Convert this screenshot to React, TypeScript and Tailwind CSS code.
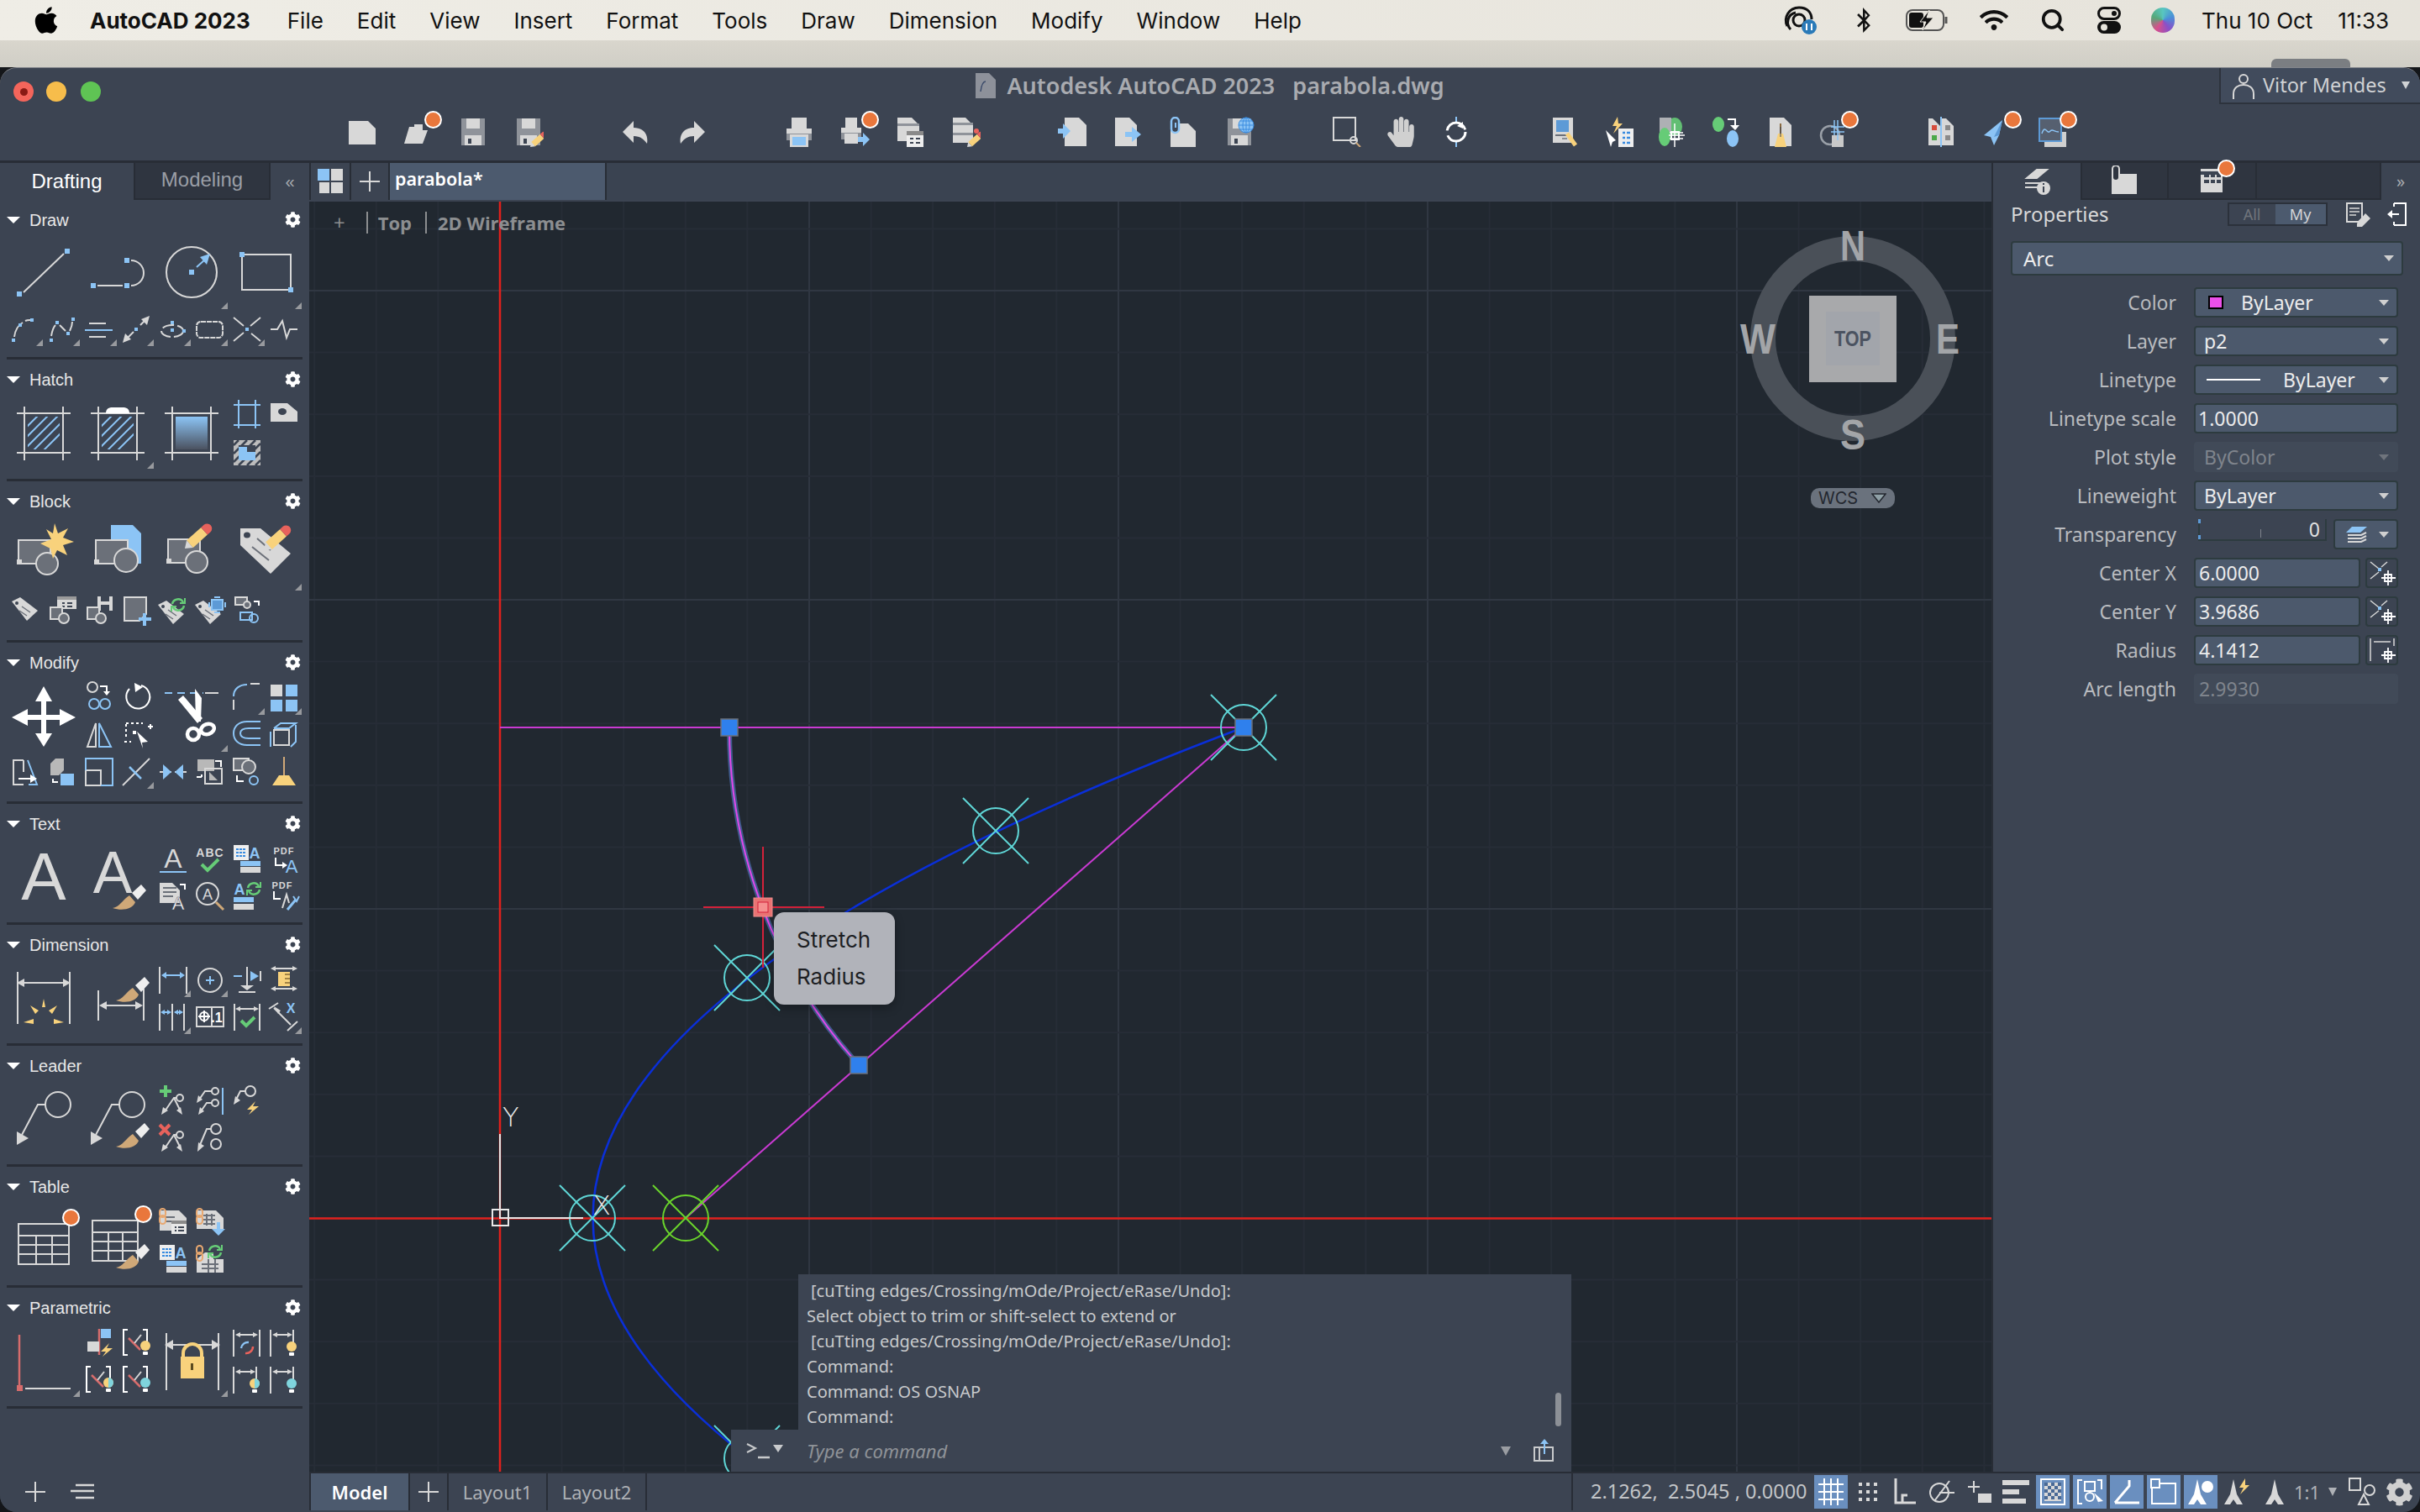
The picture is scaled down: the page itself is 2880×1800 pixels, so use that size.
import { FaApple, FaBluetoothB, FaCog, FaHandPaper, FaWifi } from "react-icons/fa";
import { Search } from "lucide-react";
import type { ReactNode } from "react";

const W = "#d8d8d8";
const B = "#8cc4f5";
const Y = "#f8d27c";
const RD = "#e8625c";
const GR = "#66cc77";
const TN = "#cfa878";
const DK = "#6b7079";
const BG = "#3c4452";

type PathProps = { d: string; c?: string; w?: number };
const P = ({ d, c = W, w = 2 }: PathProps) => <path d={d} fill="none" stroke={c} strokeWidth={w} />;
const F = ({ d, c = W }: PathProps) => <path d={d} fill={c} />;
const R = ({ x, y, w, h, c = W }: { x: number; y: number; w: number; h: number; c?: string }) => (
  <rect x={x} y={y} width={w} height={h} fill={c} />
);
const O = ({ x, y, w, h, c = W, f = "none", s = 2 }: { x: number; y: number; w: number; h: number; c?: string; f?: string; s?: number }) => (
  <rect x={x} y={y} width={w} height={h} fill={f} stroke={c} strokeWidth={s} />
);
const C = ({ x, y, r, c = W, f = "none", s = 2 }: { x: number; y: number; r: number; c?: string; f?: string; s?: number }) => (
  <circle cx={x} cy={y} r={r} fill={f} stroke={c} strokeWidth={s} />
);
const Q = ({ x, y, s = 5, c = B }: { x: number; y: number; s?: number; c?: string }) => <rect x={x} y={y} width={s} height={s} fill={c} />;
const Doc = ({ x, y, w, h, c = W }: { x: number; y: number; w: number; h: number; c?: string }) => (
  <path d={`M${x} ${y}H${x + w - 9}L${x + w} ${y + 9}V${y + h}H${x}Z`} fill={c} />
);
const Pencil = ({ x, y, k = 1 }: { x: number; y: number; k?: number }) => (
  <g transform={`translate(${x} ${y}) scale(${k}) rotate(-42)`}>
    <path d="M0 0L7 -5V5Z" fill={W} />
    <rect x={7} y={-5} width={20} height={10} fill={Y} />
    <path d="M27 -5H31A5 5 0 0 1 31 5H27Z" fill={RD} />
  </g>
);
const Brush = ({ x, y }: { x: number; y: number }) => (
  <g transform={`translate(${x} ${y})`}>
    <path d="M0 0C8 -1 12 -10 20 -15L27 -7C24 1 12 4 0 0Z" fill={TN} />
    <path d="M23 -18L34 -28L40 -21L30 -10Z" fill="#eeeeee" />
  </g>
);
const Bulb = ({ x, y, c = Y, c2 }: { x: number; y: number; c?: string; c2?: string }) => (
  <g>
    <circle cx={x} cy={y} r={6} fill={c} />
    {c2 && <path d={`M${x} ${y - 6}A6 6 0 0 1 ${x} ${y + 6}Z`} fill={c2} />}
    <rect x={x - 3} y={y + 7} width={6} height={4} rx={1} fill="#ffffff" />
  </g>
);
const Sync = ({ x, y }: { x: number; y: number }) => (
  <g transform={`translate(${x} ${y})`} fill="none" stroke={GR} strokeWidth={2.5}>
    <path d="M-7 -1A7 7 0 0 1 6 -3" />
    <path d="M7 1A7 7 0 0 1 -6 3" />
    <path d="M8 -8V-2H2" strokeWidth={2} />
    <path d="M-8 8V2H-2" strokeWidth={2} />
  </g>
);
const Bolt = ({ x, y, c = Y }: { x: number; y: number; c?: string }) => (
  <path transform={`translate(${x} ${y})`} d="M4 -8L-6 2H0L-4 8L8 -2H1Z" fill={c} />
);
const TagS = ({ x = 0, y = 0 }: { x?: number; y?: number }) => (
  <g transform={`translate(${x} ${y})`}>
    <path d="M6 11L16 6L37 22L24 34Z" fill={W} />
    <circle cx={12} cy={13} r={2} fill={BG} />
    <path d="M18 17L28 24M15 22L24 28" stroke={DK} strokeWidth={1.5} />
  </g>
);
const Chain = ({ x, y }: { x: number; y: number }) => (
  <g transform={`translate(${x} ${y})`} fill="none" stroke="#e8a870" strokeWidth={2}>
    <rect x={0} y={0} width={7} height={10} rx={3.5} />
    <rect x={0} y={8} width={7} height={10} rx={3.5} />
  </g>
);

const S = ({ children }: { children?: ReactNode }) => (
  <svg width={44} height={44} viewBox="0 0 44 44" fill="none">{children}</svg>
);
const G = ({ children }: { children?: ReactNode }) => (
  <svg className="overflow-visible" width={88} height={88} viewBox="0 0 88 88" fill="none">{children}</svg>
);
const T = ({ children }: { children?: ReactNode }) => (
  <svg width={36} height={36} viewBox="0 0 36 36" fill="none">{children}</svg>
);

function Cell({ lg, fly, children }: { lg?: boolean; fly?: boolean; children?: ReactNode }) {
  return (
    <div className={lg ? "relative col-span-2 row-span-2 flex items-center justify-center" : "relative flex items-center justify-center"}>
      {children}
      {fly && <span className="absolute right-[1px] bottom-[2px] h-[8px] w-[8px] bg-[#989a9e] [clip-path:polygon(100%_0,100%_100%,0_100%)]" />}
    </div>
  );
}

function Section({ name, h, children }: { name: string; h: string; children: ReactNode }) {
  return (
    <section className={`${h} mx-[8px] border-b-[3px] border-[#282d36]`}>
      <div className="flex h-[44px] items-center justify-between pt-[3px]">
        <div className="flex items-center">
          <span className="h-0 w-0 border-x-[8px] border-t-[8px] border-x-transparent border-t-white" />
          <span className="ml-[11px] font-['Liberation_Sans'] text-[20px] text-[#e8e8e8]">{name}</span>
        </div>
        <FaCog className="mr-[2px] text-[19px] text-white" />
      </div>
      <div className="grid grid-cols-[repeat(8,44px)] auto-rows-[44px]">{children}</div>
    </section>
  );
}

const Frame = () => (
  <P d="M12 20H76M12 67H76M21 12V76M67 12V76" />
);
const Hatches = ({ id }: { id: string }) => (
  <g>
    <clipPath id={id}><rect x={25} y={24} width={38} height={39} /></clipPath>
    <path clipPath={`url(#${id})`} d="M10 50L44 16M10 62L56 16M20 64L68 16M32 64L70 26M44 64L72 36" stroke={B} strokeWidth={2} />
  </g>
);

function LeftPanel() {
  return (
    <aside className="flex h-full w-[368px] shrink-0 flex-col bg-[#3c4452]">
      <div className="flex h-[44px] shrink-0 font-['Liberation_Sans'] text-[24px]">
        <div className="flex w-[159px] items-center justify-center text-white">Drafting</div>
        <div className="flex w-[163px] items-center justify-center border-x-2 border-b-2 border-[#282d36] bg-[#2f3540] pb-[2px] text-[#9a9ea6]">Modeling</div>
        <div className="flex flex-1 items-center justify-center text-[20px] text-[#a8abb0]">«</div>
      </div>

      <Section name="Draw" h="h-[190px]">
        <Cell lg><G><P d="M20 66L68 20" /><Q x={12} y={65} s={6} /><Q x={69} y={14} s={6} /></G></Cell>
        <Cell lg><G><P d="M20 58H50" /><P d="M60 28A15 15 0 0 1 60 58" /><Q x={12} y={55} s={6} /><Q x={52} y={55} s={6} /><Q x={52} y={25} s={6} /></G></Cell>
        <Cell lg fly><G><C x={44} y={42} r={30} /><Q x={41} y={39} s={6} /><P d="M50 36L60 27" c={B} /><F d="M66 20L62 33L54 24Z" c={B} /></G></Cell>
        <Cell lg fly><G><O x={16} y={21} w={58} h={42} /><Q x={13} y={18} s={6} /><Q x={71} y={60} s={6} /></G></Cell>
        <Cell fly><S><P d="M9 31C10 23 14 17 19 14M22 12C24 11 26 11 28 11" /><Q x={6} y={33} s={4} /><Q x={14} y={15} s={4} /><Q x={28} y={9} s={4} /></S></Cell>
        <Cell fly><S><P d="M9 30C10 24 11 20 14 17M19 17L26 24M31 24C33 20 34 16 34 13" /><Q x={7} y={33} s={4} /><Q x={14} y={12} s={4} /><Q x={27} y={25} s={4} /><Q x={33} y={8} s={4} /></S></Cell>
        <Cell fly><S><P d="M10 15H30M10 31H30" /><P d="M5 23H38" c={B} /></S></Cell>
        <Cell fly><S><P d="M11 33L19 25M27 17L35 9" /><F d="M6 38L9 27L16 34Z" /><F d="M38 6L35 17L28 10Z" /><Q x={20} y={20} s={4} /></S></Cell>
        <Cell fly><S><ellipse cx={21} cy={24} rx={13} ry={7} stroke={W} strokeWidth={2} strokeDasharray="14 4" /><Q x={19} y={21} s={4} /><Q x={19} y={12} s={4} /><Q x={33} y={22} s={4} /></S></Cell>
        <Cell fly><S><rect x={6} y={13} width={31} height={19} rx={5} stroke={W} strokeWidth={2} strokeDasharray="6 1" /></S></Cell>
        <Cell fly><S><P d="M6 8L18 18M38 8L26 18M6 36L18 26M38 36L27 27" w={1.8} /><Q x={20} y={20} s={4} /></S></Cell>
        <Cell><S><P d="M6 22H14L20 12L25 32L29 22H38" /></S></Cell>
      </Section>

      <Section name="Hatch" h="h-[145px]">
        <Cell lg><G><Frame /><Hatches id="h1" /></G></Cell>
        <Cell lg fly><G><Frame /><Hatches id="h2" /><F d="M30 20C30 14 34 13 38 13H50C54 13 58 14 58 20Z" c="#ffffff" /></G></Cell>
        <Cell lg>
          <G>
            <defs><linearGradient id="hg" x1="0" y1="0" x2="0" y2="1"><stop offset="0" stopColor={B} /><stop offset="1" stopColor="#4b5260" /></linearGradient></defs>
            <Frame /><rect x={25} y={24} width={38} height={39} fill="url(#hg)" />
          </G>
        </Cell>
        <Cell><S><P d="M6 10H38M6 34H38M12 4V38M32 4V38" c={B} /></S></Cell>
        <Cell><S><F d="M6 8H26L38 18V30H6Z" /><ellipse cx={20} cy={18} rx={5} ry={4} fill={BG} /></S></Cell>
        <Cell><S><R x={6} y={8} w={32} h={30} c="#bdbdbd" /><path d="M6 14L12 8M6 24L22 8M6 34L32 8M12 38L38 12M22 38L38 22M32 38L38 32" stroke={BG} strokeWidth={2.5} /><R x={12} y={14} w={20} h={18} c={BG} /><F d="M12 16H22V22H32V32H12Z" c={B} /></S></Cell>
      </Section>

      <Section name="Block" h="h-[192px]">
        <Cell lg><G><O x={14} y={26} w={38} h={28} f={DK} /><C x={48} y={54} r={13} f={DK} /><Q x={12} y={49} s={6} c={W} /><path d="M57 6L61 18L73 12L67 23L80 28L67 32L72 44L60 38L55 48L52 36L40 30L53 25L47 13L55 18Z" fill={Y} /></G></Cell>
        <Cell lg><G><F d="M36 8H62L72 18V54H56L36 34Z" c={B} /><O x={18} y={26} w={38} h={28} f={DK} /><C x={54} y={50} r={14} f={DK} /><Q x={16} y={49} s={6} c={W} /></G></Cell>
        <Cell lg><G><O x={16} y={25} w={38} h={28} f={DK} /><C x={50} y={52} r={13} f={DK} /><Q x={14} y={48} s={6} c={W} /><Pencil x={36} y={36} k={1.15} /></G></Cell>
        <Cell lg fly><G><path d="M14 12H38L74 42L50 66L14 32Z" fill={W} /><ellipse cx={22} cy={20} rx={4} ry={3.5} fill={BG} /><path d="M34 24L50 38M28 34L48 50" stroke={DK} strokeWidth={2} /><Pencil x={42} y={38} k={1.15} /></G></Cell>
        <Cell><S><TagS /></S></Cell>
        <Cell><S><R x={16} y={5} w={23} h={15} /><R x={16} y={5} w={23} h={4} c="#9a9a9a" /><P d="M22 13H25M28 13H34M22 17H25M28 17H34" c={BG} /><O x={8} y={18} w={14} h={14} f={DK} /><C x={24} y={31} r={6} f={DK} /></S></Cell>
        <Cell><S><R x={20} y={5} w={18} h={17} c={W} /><R x={24} y={5} w={10} h={6} c={BG} /><R x={24} y={15} w={10} h={7} c={BG} /><O x={8} y={18} w={14} h={14} f={DK} /><C x={24} y={31} r={6} f={DK} /></S></Cell>
        <Cell><S><path d="M8 6H34V26L26 34H8Z" fill={DK} stroke={W} strokeWidth={2} /><path d="M25 32H40M32 25V40" stroke={B} strokeWidth={4} /></S></Cell>
        <Cell><S><TagS x={-2} y={4} /><Sync x={28} y={15} /></S></Cell>
        <Cell><S><TagS x={-2} y={4} /><O x={24} y={9} w={13} h={12} c={B} f="#5d9ad6" /><P d="M21 12V18M40 12V18M27 6H34M27 24H34" c={B} /></S></Cell>
        <Cell><S><O x={8} y={6} w={14} h={9} f={DK} /><C x={22} y={15} r={4} f={DK} /><P d="M30 11H36V16" c="#ffffff" /><O x={14} y={24} w={14} h={9} c={B} /><C x={30} y={31} r={5} c={B} /></S></Cell>
      </Section>

      <Section name="Modify" h="h-[192px]">
        <Cell lg><G><F d="M44 8L54 26H47V42H63V35L82 45L63 55V48H47V64H54L44 80L34 64H41V48H25V55L6 45L25 35V42H41V26H34Z" c="#ffffff" /></G></Cell>
        <Cell><S><C x={14} y={9} r={6} /><P d="M23 8H31V15" c="#ffffff" /><F d="M27 14H35L31 19Z" c="#ffffff" /><C x={16} y={29} r={6} c={B} /><C x={29} y={29} r={6} c={B} /></S></Cell>
        <Cell><S><path d="M28 7A14 14 0 1 1 14 11" stroke="#ffffff" strokeWidth={2} fill="none" /><F d="M20 4L30 9L21 15Z" c="#ffffff" /></S></Cell>
        <Cell lg fly>
          <G>
            <path d="M12 16H58" stroke={B} strokeWidth={2} strokeDasharray="9 6" />
            <P d="M60 16H76" c={W} />
            <F d="M48 11L56 22L55 50H49Z" c="#ffffff" />
            <F d="M28 24L34 19L57 46L51 52Z" c="#ffffff" />
            <circle cx={46} cy={65} r={7} stroke="#ffffff" strokeWidth={4.5} />
            <ellipse cx={63} cy={59} rx={8} ry={6} stroke="#ffffff" strokeWidth={4.5} transform="rotate(-20 63 59)" />
          </G>
        </Cell>
        <Cell fly><S><path d="M6 20C6 11 13 6 22 6" stroke={B} strokeWidth={2} fill="none" /><P d="M26 5H37M6 24V36" /></S></Cell>
        <Cell fly><S><R x={6} y={6} w={14} h={14} /><R x={24} y={6} w={14} h={14} c={B} /><R x={6} y={24} w={14} h={14} c={B} /><R x={24} y={24} w={14} h={14} c={B} /></S></Cell>
        <Cell><S><P d="M18 8V36H8Z" /><path d="M22 8V36H36Z" stroke={B} strokeWidth={2} /></S></Cell>
        <Cell><S><path d="M10 8H30M10 24V8M8 30H16" stroke="#ffffff" strokeWidth={2} strokeDasharray="3 3" /><Q x={18} y={17} s={4} c="#ffffff" /><F d="M23 18L36 30L29 31L30 38Z" c="#ffffff" /><P d="M36 12H42M39 9V15" c="#ffffff" /></S></Cell>
        <Cell><S><path d="M38 6H22C12 6 6 12 6 20C6 28 12 34 22 34H38M38 14H24C18 14 14 16 14 20C14 24 18 26 24 26H38" stroke={B} strokeWidth={2} fill="none" /></S></Cell>
        <Cell><S><O x={10} y={16} w={18} h={18} /><path d="M10 14L18 8H36L28 14H10" stroke={B} strokeWidth={2} /><path d="M6 18V36M36 10V30L30 36" stroke={B} strokeWidth={2} /></S></Cell>
        <Cell><S><P d="M20 8H8V37H20M20 8V22" /><path d="M25 8L36 37H26" stroke={B} strokeWidth={2} /><P d="M14 30H28" c="#ffffff" /><F d="M28 25L36 30L28 35Z" c="#ffffff" /></S></Cell>
        <Cell><S><path d="M8 12L14 6H24V20L18 26H8Z" fill="#b8b8b8" /><P d="M11 30V34H17" c="#ffffff" /><R x={20} y={24} w={16} h={14} c={B} /></S></Cell>
        <Cell><S><O x={6} y={20} w={18} h={18} /><path d="M6 20V6H38V38H24" stroke={B} strokeWidth={2} /></S></Cell>
        <Cell fly><S><P d="M6 38L38 6" /><path d="M14 16L28 30" stroke={B} strokeWidth={2.5} /></S></Cell>
        <Cell><S><P d="M6 22H20M24 22H38" /><F d="M10 13L20 22L10 31Z" c={B} /><F d="M34 13L24 22L34 31Z" c={B} /></S></Cell>
        <Cell><S><R x={7} y={7} w={20} h={14} c="#b8b8b8" /><P d="M28 9H35V16" c="#ffffff" /><P d="M6 28H12M12 25V28" c="#ffffff" /><O x={16} y={18} w={20} h={18} /><F d="M21 22V32H31Z" c="#b8b8b8" /></S></Cell>
        <Cell><S><O x={6} y={6} w={18} h={14} f={DK} /><C x={24} y={16} r={8} f={DK} /><P d="M10 26V33H18" c="#ffffff" /><C x={30} y={32} r={5} c={B} /></S></Cell>
        <Cell><S><path d="M22 4V26" stroke={TN} strokeWidth={2} /><F d="M16 26H28L36 38H8Z" c={Y} /></S></Cell>
      </Section>

      <Section name="Text" h="h-[144px]">
        <Cell lg><G><text x={44} y={70} textAnchor="middle" fontFamily="Liberation Sans" fontSize={80} fill={W}>A</text></G></Cell>
        <Cell lg><G><text x={38} y={62} textAnchor="middle" fontFamily="Liberation Sans" fontSize={70} fill={W}>A</text><Brush x={38} y={80} /></G></Cell>
        <Cell><S><text x={22} y={32} textAnchor="middle" fontFamily="Liberation Sans" fontSize={32} fill={W}>A</text><P d="M6 37H38" c={B} /></S></Cell>
        <Cell><S><text x={22} y={19} textAnchor="middle" fontFamily="Liberation Sans" fontWeight="bold" fontSize={14} letterSpacing={1} fill={W}>ABC</text><path d="M12 28L19 35L32 22" stroke={GR} strokeWidth={4} /></S></Cell>
        <Cell><S><R x={6} y={5} w={18} h={18} c="#eeeeee" /><path d="M9 10H21M9 14H21M9 18H21" stroke="#3a8ce0" strokeWidth={2} strokeDasharray="3 1" /><text x={31} y={21} textAnchor="middle" fontFamily="Liberation Sans" fontWeight="bold" fontSize={18} fill={B}>A</text><R x={14} y={24} w={24} h={6} c={B} /><R x={14} y={31} w={24} h={7} /></S></Cell>
        <Cell><S><text x={22} y={16} textAnchor="middle" fontFamily="Liberation Sans" fontWeight="bold" fontSize={11} letterSpacing={1} fill={W}>PDF</text><P d="M12 20V29H21" c="#ffffff" /><F d="M20 25L26 29L20 33Z" c="#ffffff" /><text x={31} y={38} textAnchor="middle" fontFamily="Liberation Sans" fontSize={22} fill={B}>A</text></S></Cell>
        <Cell><S><Doc x={6} y={6} w={24} h={24} /><P d="M10 12H26M10 17H26M10 22H22" c={DK} /><P d="M30 8H36V14" c="#ffffff" /><text x={28} y={38} textAnchor="middle" fontFamily="Liberation Sans" fontSize={22} fill="#ffffff" stroke={BG} strokeWidth={0.5}>A</text></S></Cell>
        <Cell><S><C x={19} y={19} r={13} /><text x={19} y={26} textAnchor="middle" fontFamily="Liberation Sans" fontSize={18} fill={W}>A</text><path d="M29 29L38 38" stroke={TN} strokeWidth={3} /></S></Cell>
        <Cell><S><text x={13} y={20} textAnchor="middle" fontFamily="Liberation Sans" fontWeight="bold" fontSize={18} fill={B}>A</text><Sync x={30} y={13} /><R x={6} y={23} w={24} h={6} c={B} /><R x={6} y={31} w={24} h={7} /></S></Cell>
        <Cell><S><text x={20} y={13} textAnchor="middle" fontFamily="Liberation Sans" fontWeight="bold" fontSize={11} letterSpacing={1} fill={W}>PDF</text><P d="M10 16V25H18" c="#ffffff" /><P d="M20 36L25 20L28 30" /><path d="M26 38L36 26" stroke={B} strokeWidth={3} /><path d="M33 22L37 28L40 22" stroke={B} strokeWidth={2} /></S></Cell>
      </Section>

      <Section name="Dimension" h="h-[144px]">
        <Cell lg><G><P d="M13 12V74M75 12V74M20 25H68" /><F d="M12 25L21 20V30Z" /><F d="M76 25L67 20V30Z" /><path d="M44 44L46 54H42ZM28 52L38 58L34 62ZM60 52L50 58L54 62ZM20 72L32 68V74ZM68 72L56 68V74Z" fill={Y} /></G></Cell>
        <Cell lg><G><P d="M21 34V70M75 32V70M30 52H66" /><F d="M22 52L31 47V57Z" /><F d="M74 52L65 47V57Z" /><Brush x={42} y={46} /></G></Cell>
        <Cell fly><S><P d="M6 6V38M38 6V38" /><path d="M11 16H33" stroke={B} strokeWidth={2} /><F d="M8 16L14 12V20Z" c={B} /><F d="M36 16L30 12V20Z" c={B} /></S></Cell>
        <Cell fly><S><C x={22} y={22} r={14} /><path d="M17 22H27M22 17V27" stroke={B} strokeWidth={2} /></S></Cell>
        <Cell><S><P d="M22 6V32M12 36H32" /><F d="M14 28H30L22 34Z" /><path d="M6 17H16" stroke={B} strokeWidth={2} /><F d="M36 17L26 11V23Z" c={B} /><P d="M38 11V23" c={W} /></S></Cell>
        <Cell><S><P d="M8 8H36M8 32H36" /><F d="M6 8L12 5V11Z" /><F d="M38 8L32 5V11Z" /><F d="M6 32L12 29V35Z" /><F d="M38 32L32 29V35Z" /><R x={15} y={12} w={14} h={17} c={Y} /><P d="M23 15H29M23 20H29M23 25H29" c="#a28345" /></S></Cell>
        <Cell fly><S><P d="M6 6V38M21 6V38M35 6V38" /><path d="M9 16H18M24 16H33" stroke={B} strokeWidth={2} /><F d="M7 16L12 13V19Z" c={B} /><F d="M20 16L15 13V19Z" c={B} /><F d="M23 16L28 13V19Z" c={B} /><F d="M34 16L29 13V19Z" c={B} /></S></Cell>
        <Cell><S><O x={6} y={10} w={32} h={23} /><P d="M24 10V33" /><C x={15} y={21} r={5} c="#ffffff" /><P d="M15 14V28M8 21H22" c="#ffffff" /><text x={30} y={28} textAnchor="middle" fontFamily="Liberation Sans" fontWeight="bold" fontSize={16} fill="#ffffff">.1</text></S></Cell>
        <Cell><S><P d="M7 6V38M37 6V38M12 12H32" /><F d="M8 12L14 9V15Z" /><F d="M36 12L30 9V15Z" /><path d="M15 26L21 32L31 22" stroke={GR} strokeWidth={4} /></S></Cell>
        <Cell fly><S><P d="M4 12L15 5M10 11L30 31M26 38L38 27" /><F d="M10 9L15 18L18 14Z" /><text x={30} y={17} textAnchor="middle" fontFamily="Liberation Sans" fontWeight="bold" fontSize={16} fill={B}>X</text></S></Cell>
      </Section>

      <Section name="Leader" h="h-[144px]">
        <Cell lg><G><C x={61} y={26} r={15} /><P d="M46 26H37L18 62" /><F d="M12 74L12 58L26 66Z" /></G></Cell>
        <Cell lg><G><C x={61} y={26} r={15} /><P d="M46 26H37L18 62" /><F d="M12 74L12 58L26 66Z" /><Brush x={42} y={76} /></G></Cell>
        <Cell><S><path d="M6 10H20M13 3V17" stroke={GR} strokeWidth={4} /><C x={30} y={18} r={4} /><P d="M26 18H23L12 34M23 18L30 32" /><F d="M8 38L10 29L16 33Z" /><F d="M33 38L26 33L31 29Z" /></S></Cell>
        <Cell><S><C x={28} y={10} r={4} /><C x={28} y={24} r={4} /><P d="M24 10H16L9 20M24 24H18L11 34" /><F d="M6 24L8 15L13 20Z" /><F d="M8 38L10 29L15 34Z" /><path d="M37 6V38" stroke={B} strokeWidth={2} /></S></Cell>
        <Cell><S><C x={26} y={10} r={6} /><P d="M20 10H14L9 20" /><F d="M6 26L8 16L14 21Z" /><Bolt x={28} y={30} /></S></Cell>
        <Cell />
        <Cell><S><path d="M6 6L18 18M18 6L6 18" stroke={RD} strokeWidth={4} /><C x={30} y={18} r={4} /><P d="M26 18H23L12 34M23 18L30 32" /><F d="M8 38L10 29L16 33Z" /><F d="M33 38L26 33L31 29Z" /></S></Cell>
        <Cell><S><C x={29} y={11} r={6} /><C x={29} y={29} r={6} /><P d="M23 11H18L10 30" /><F d="M7 38L8 27L15 31Z" /></S></Cell>
      </Section>

      <Section name="Table" h="h-[144px]">
        <Cell lg><G><O x={14} y={24} w={60} h={48} /><P d="M14 38H74M14 49H74M14 60H74M35 38V72M54 38V72" /></G><span className="absolute left-[66px] top-[6px] h-[21px] w-[21px] rounded-full border-2 border-white bg-[#e9773c]" /></Cell>
        <Cell lg><G><O x={14} y={20} w={54} h={48} /><P d="M14 34H68M14 45H68M14 56H68M33 34V68M50 34V68" /><Brush x={42} y={76} /></G><span className="absolute left-[64px] top-[2px] h-[21px] w-[21px] rounded-full border-2 border-white bg-[#e9773c]" /></Cell>
        <Cell><S><Doc x={6} y={8} w={32} h={24} /><P d="M12 16H24M12 21H24" c={DK} /><Chain x={6} y={6} /><R x={20} y={20} w={18} h={16} c="#e8e8e8" /><R x={20} y={20} w={18} h={4} c="#8a8a8a" /><P d="M24 28H26M28 28H35M24 32H26M28 32H35" c={BG} /></S></Cell>
        <Cell><S><Doc x={6} y={8} w={32} h={22} /><P d="M14 14H28M14 19H28M14 24H28M18 12V26M24 12V26" c={DK} /><Chain x={6} y={6} /><path d="M32 22V30" stroke={B} strokeWidth={4} /><F d="M24 30H40L32 38Z" c={B} /></S></Cell>
        <Cell />
        <Cell />
        <Cell><S><R x={6} y={5} w={18} h={18} c="#eeeeee" /><path d="M9 10H21M9 14H21M9 18H21" stroke="#3a8ce0" strokeWidth={2} strokeDasharray="3 1" /><text x={31} y={21} textAnchor="middle" fontFamily="Liberation Sans" fontWeight="bold" fontSize={18} fill={B}>A</text><R x={14} y={24} w={24} h={6} c={B} /><R x={14} y={31} w={24} h={7} /></S></Cell>
        <Cell><S><path d="M6 22L16 14H26V22H38V38H6Z" fill={W} /><P d="M12 28H32M12 33H32M20 22V38M28 22V38" c={DK} /><Chain x={6} y={6} /><Sync x={28} y={13} /></S></Cell>
      </Section>

      <Section name="Parametric" h="h-[144px]">
        <Cell lg fly><G><path d="M15 12V72" stroke="#d66c6c" strokeWidth={2.5} /><R x={12} y={72} w={7} h={7} c="#d66c6c" /><P d="M22 76H76" /></G></Cell>
        <Cell><S><path d="M22 5V36" stroke="#d66c6c" strokeWidth={2.5} /><R x={24} y={5} w={12} h={11} c={B} /><R x={8} y={20} w={14} h={12} /><Bolt x={30} y={30} /></S></Cell>
        <Cell><S><P d="M12 6H7V36H12M30 6H35V20" c="#ffffff" /><path d="M13 16L27 30" stroke="#d66c6c" strokeWidth={2.5} /><P d="M20 22L28 12" /><Bulb x={33} y={25} /></S></Cell>
        <Cell lg fly><G><P d="M14 10V78M76 10V78M20 24H70" /><F d="M12 24L22 18V30Z" /><F d="M78 24L68 18V30Z" /><path d="M34 38V34A11 11 0 0 1 56 34V38" stroke={Y} strokeWidth={4} fill="none" /><R x={31} y={38} w={28} h={26} c={Y} /><R x={43} y={46} w={3} h={8} c="#5a4a20" /></G></Cell>
        <Cell><S><P d="M6 6V38M37 6V38M12 12H32" /><F d="M8 12L14 9V15Z" /><F d="M35 12L29 9V15Z" /><path d="M15 28A8 8 0 0 1 24 21" stroke={B} strokeWidth={2.5} fill="none" /><path d="M29 26A8 8 0 0 1 20 34" stroke={RD} strokeWidth={2.5} fill="none" /></S></Cell>
        <Cell><S><P d="M6 6V38M33 6V22M10 12H30" /><F d="M8 12L14 9V15Z" /><F d="M32 12L26 9V15Z" /><Bulb x={31} y={26} /></S></Cell>
        <Cell><S><P d="M12 6H7V36H12M30 6H35V20" c="#ffffff" /><path d="M13 16L27 30" stroke="#d66c6c" strokeWidth={2.5} /><P d="M20 22L28 12" /><Bulb x={33} y={25} c={Y} c2="#7fd4dd" /></S></Cell>
        <Cell><S><P d="M12 6H7V36H12M30 6H35V20" c="#ffffff" /><path d="M13 16L27 30" stroke="#d66c6c" strokeWidth={2.5} /><P d="M20 22L28 12" /><Bulb x={33} y={25} c="#7fd4dd" /></S></Cell>
        <Cell><S><P d="M6 6V38M33 6V22M10 12H30" /><F d="M8 12L14 9V15Z" /><F d="M32 12L26 9V15Z" /><Bulb x={31} y={26} c={Y} c2="#7fd4dd" /></S></Cell>
        <Cell><S><P d="M6 6V38M33 6V22M10 12H30" /><F d="M8 12L14 9V15Z" /><F d="M32 12L26 9V15Z" /><Bulb x={31} y={26} c="#7fd4dd" /></S></Cell>
      </Section>

      <div className="mt-auto flex h-[44px] items-center gap-[30px] pb-[4px] pl-[30px]">
        <svg width={24} height={24} viewBox="0 0 24 24"><path d="M0 12H24M12 0V24" stroke="#d8d8d8" strokeWidth={2} /></svg>
        <svg width={28} height={20} viewBox="0 0 28 20"><path d="M6 2H28M0 9H28M6 17H28" stroke="#d8d8d8" strokeWidth={2.5} /></svg>
      </div>
    </aside>
  );
}

function Badge() {
  return <span className="absolute left-[26px] top-[-7px] h-[21px] w-[21px] rounded-full border-2 border-white bg-[#e9773c]" />;
}

function Tool({ badge, children }: { badge?: boolean; children: ReactNode }) {
  return (
    <div className="relative h-[36px] w-[36px]">
      {children}
      {badge && <Badge />}
    </div>
  );
}

const Floppy = () => (
  <g>
    <R x={4} y={2} w={28} h={32} c="#8f939a" />
    <R x={10} y={2} w={16} h={12} />
    <R x={8} y={22} w={20} h={12} />
    <R x={12} y={26} w={4} h={6} c={BG} />
  </g>
);
const Printer = () => (
  <g>
    <R x={9} y={1} w={18} h={13} />
    <R x={3} y={14} w={30} h={6} />
    <R x={3} y={20} w={30} h={8} c="#8f939a" />
    <R x={7} y={21} w={22} h={15} />
    <R x={10} y={24} w={16} h={10} c={B} />
  </g>
);

function Toolbar() {
  return (
    <div className="flex h-[68px] items-center gap-[92px] pl-[413px]">
      <div className="flex gap-[30px]">
        <Tool><T><Doc x={2} y={5} w={32} h={28} /></T></Tool>
        <Tool badge><T><F d="M2 32L8 12H14V9H24V16H30L24 32Z" /></T></Tool>
        <Tool><T><Floppy /></T></Tool>
        <Tool><T><Floppy /><Pencil x={20} y={36} k={0.7} /></T></Tool>
      </div>
      <div className="flex gap-[30px]">
        <Tool><T><F d="M2 18L15 5V13C26 13 33 20 31 32C27 26 22 23 15 23V31Z" /></T></Tool>
        <Tool><T><F d="M34 18L21 5V13C10 13 3 20 5 32C9 26 14 23 21 23V31Z" /></T></Tool>
      </div>
      <div className="flex gap-[30px]">
        <Tool><T><Printer /></T></Tool>
        <Tool badge><T><R x={7} y={1} w={14} h={12} /><R x={2} y={13} w={24} h={6} /><R x={2} y={19} w={24} h={8} c="#8f939a" /><R x={6} y={20} w={16} h={12} /><path d="M22 24H28V19L36 27L28 35V30H22Z" fill={B} /></T></Tool>
        <Tool><T><Doc x={3} y={1} w={26} h={28} /><R x={3} y={8} w={26} h={3} c="#8f939a" /><R x={14} y={17} w={20} h={19} c="#eeeeee" /><R x={14} y={17} w={20} h={5} c="#8a8a8a" /><P d="M18 26H22M25 26H30M18 31H22M25 31H30" c={BG} /></T></Tool>
        <Tool><T><Doc x={3} y={1} w={24} h={30} /><R x={3} y={7} w={24} h={3} c="#8f939a" /><R x={3} y={19} w={24} h={3} c="#8f939a" /><Pencil x={20} y={36} k={0.7} /><circle cx={31} cy={17} r={3} fill={RD} /></T></Tool>
      </div>
      <div className="flex gap-[30px]">
        <Tool><T><Doc x={8} y={1} w={26} h={34} /><path d="M0 14H6V8L15 17L6 26V20H0Z" fill={B} /></T></Tool>
        <Tool><T><Doc x={2} y={1} w={26} h={34} /><path d="M14 18H22V12L33 21L22 30V24H14Z" fill={B} /></T></Tool>
        <Tool><T><Doc x={2} y={8} w={30} h={28} c={W} /><rect x={3} y={1} width={9} height={18} rx={4.5} stroke={B} strokeWidth={2.5} fill={BG} /><path d="M8 7V13" stroke={B} strokeWidth={2} /></T></Tool>
        <Tool><T><Floppy /><circle cx={26} cy={10} r={9} fill={B} stroke="#3a8ce0" /><path d="M17 10H35M26 1V19M19 5H33M19 15H33" stroke="#3a8ce0" strokeWidth={1} /><ellipse cx={26} cy={10} rx={4} ry={9} stroke="#3a8ce0" fill="none" /></T></Tool>
      </div>
      <div className="flex items-center">
        <Tool><T><O x={2} y={1} w={26} h={27} /><C x={26} y={28} r={4} c={W} /><path d="M29 31L34 36" stroke={TN} strokeWidth={2} /></T></Tool>
        <div className="ml-[28px]"><Tool><FaHandPaper className="h-[36px] w-[36px] text-[#d0d0d0]" /></Tool></div>
        <div className="ml-[30px] mr-[3px]"><Tool><T><path d="M18 0V7M18 29V36" stroke={B} strokeWidth={2} /><circle cx={18} cy={18} r={11} stroke="#ffffff" strokeWidth={3} strokeDasharray="30 6" /><path d="M19 11L26 6V14Z" fill="#ffffff" /></T></Tool></div>
      </div>
      <div className="flex gap-[28px] -ml-[1px]">
        <Tool><T><R x={3} y={1} w={24} h={30} /><R x={7} y={4} w={15} h={14} c="#5d9ad6" /><P d="M6 22H20" c={DK} /><path d="M20 20L30 34" stroke={Y} strokeWidth={5} /><path d="M14 26L20 26M28 22L34 30" stroke={BG} strokeWidth={1} /></T></Tool>
        <Tool><T><F d="M2 16L14 28L10 30L8 36Z" c="#ffffff" /><path d="M16 0L10 11H15L11 20L22 8H17Z" fill={Y} /><R x={17} y={14} w={18} h={22} c="#eeeeee" /><path d="M22 19H25M27 19H31M22 25H25M27 25H31M22 31H25M27 31H31" stroke="#3a8ce0" strokeWidth={2.5} /></T></Tool>
        <Tool><T><ellipse cx={20} cy={12} rx={9} ry={11} fill={GR} opacity={0.9} /><R x={2} y={1} w={14} h={18} c="#aeb0b4" /><ellipse cx={8} cy={24} rx={7} ry={11} fill={GR} /><path d="M20 8V36M13 22H32M14 19H30M14 26H30" stroke="#ffffff" strokeWidth={1.5} /><rect x={16} y={18} width={9} height={9} fill="none" stroke="#ffffff" strokeWidth={2} /></T></Tool>
        <Tool><T><ellipse cx={8} cy={9} rx={7} ry={9} fill={GR} /><path d="M19 3H28V12" stroke="#ffffff" strokeWidth={2} fill="none" /><path d="M22 10H33L28 16Z" fill="#ffffff" /><ellipse cx={25} cy={26} rx={7} ry={10} fill={B} /></T></Tool>
        <Tool><T><Doc x={5} y={1} w={26} h={34} /><path d="M18 8V20" stroke="#8a6a40" strokeWidth={2} /><path d="M15 20H21L25 36H11Z" fill={Y} /><path d="M18 12V24" stroke={BG} strokeWidth={1} /></T></Tool>
        <Tool badge><T><C x={13} y={22} r={11} c="#9aa0a8" s={2.5} /><R x={15} y={22} w={14} h={14} c="#c9c9c9" /><path d="M22 4V28M18 4V22M14 12H30M14 18H30" stroke={B} strokeWidth={1.5} /></T></Tool>
      </div>
      <div className="flex gap-[30px]">
        <Tool><T><Doc x={2} y={2} w={14} h={32} /><Doc x={18} y={2} w={14} h={32} /><R x={6} y={10} w={6} h={6} c="#d64c3c" /><R x={6} y={22} w={6} h={6} c="#4aa84a" /><R x={22} y={10} w={6} h={6} c="#8a8a8a" /><R x={22} y={22} w={6} h={6} c="#8a8a8a" /><path d="M17 0V36" stroke={B} strokeWidth={2} /></T></Tool>
        <Tool badge><T><path d="M24 4L2 22L10 24L14 34L20 22Z" fill={B} /><path d="M24 4L14 24L20 22Z" fill="#5d9ad6" /></T></Tool>
        <Tool badge><T><R x={8} y={18} w={26} h={18} c="#d0d0d0" /><rect x={2} y={2} width={26} height={27} fill="#566070" stroke="#5d9ad6" strokeWidth={2} /><path d="M5 20C9 8 11 22 15 17C18 14 19 18 25 18" stroke={B} strokeWidth={1.5} fill="none" /></T></Tool>
      </div>
    </div>
  );
}

function Compass() {
  const letter = "#a3a5a8";
  return (
    <svg className="absolute left-[1680px] top-[8px]" width={320} height={320} viewBox="0 0 320 320">
      <circle cx={157} cy={155} r={107} fill="none" stroke="#4a5058" strokeWidth={30} />
      <rect x={105} y={104} width={104} height={103} fill="#a8a9ab" />
      <rect x={125} y={123} width={64} height={64} fill="#a2a5ab" />
      <text x={157} y={164} textAnchor="middle" fontFamily="Liberation Sans" fontWeight="bold" fontSize={26} textLength={44} lengthAdjust="spacingAndGlyphs" fill="#4b5361">TOP</text>
      <g fontFamily="Liberation Sans" fontWeight="bold" fontSize={50} fill={letter} textAnchor="middle">
        <text x={157} y={62} textLength={30} lengthAdjust="spacingAndGlyphs">N</text>
        <text x={157} y={287} textLength={30} lengthAdjust="spacingAndGlyphs">S</text>
        <text x={270} y={173} textLength={28} lengthAdjust="spacingAndGlyphs">E</text>
        <text x={44} y={173} textLength={42} lengthAdjust="spacingAndGlyphs">W</text>
      </g>
    </svg>
  );
}

function Marker({ x, y, c = "#5fd6d6" }: { x: number; y: number; c?: string }) {
  return (
    <g stroke={c} strokeWidth={2} fill="none">
      <circle cx={x} cy={y} r={27} />
      <path d={`M${x - 39} ${y - 39}L${x + 39} ${y + 39}M${x - 39} ${y + 39}L${x + 39} ${y - 39}`} />
    </g>
  );
}

function Grip({ x, y }: { x: number; y: number }) {
  return <rect x={x - 10} y={y - 10} width={20} height={20} fill="#2f80ed" stroke="#6b7079" strokeWidth={1.5} />;
}

function Drawing() {
  const xs = Array.from({ length: 28 }, (_, i) => 595 + (i - 3) * 73.6);
  const ys = Array.from({ length: 22 }, (_, i) => 1450 + (i - 16) * 73.6);
  return (
    <svg className="absolute inset-0" width={2002} height={1512} viewBox="368 240 2002 1512">
      {xs.map((x, i) => (
        <line key={x} x1={x} x2={x} y1={240} y2={1752} stroke={(i - 3) % 5 === 0 ? "#303742" : "#272d37"} strokeWidth={2} />
      ))}
      {ys.map((y, i) => (
        <line key={y} y1={y} y2={y} x1={368} x2={2370} stroke={(i - 16) % 5 === 0 ? "#303742" : "#272d37"} strokeWidth={2} />
      ))}
      <path d="M595 240V1752M368 1450.5H2370" stroke="#e0201c" strokeWidth={2.5} />
      <path d="M595 866H1480" stroke="#c93ad2" strokeWidth={2} />
      <path d="M816 1450L1480 866" stroke="#c93ad2" strokeWidth={2} />
      <path d="M868 866A600 600 0 0 0 1022 1268" stroke="#3f5a8c" strokeWidth={6} fill="none" />
      <path d="M868 866A600 600 0 0 0 1022 1268" stroke="#e048ea" strokeWidth={2} fill="none" />
      <path d="M1480 866Q326.6 1301 891 1736" stroke="#0a2fd8" strokeWidth={2.5} fill="none" />
      <Marker x={1480} y={866} />
      <Marker x={1185} y={989} />
      <Marker x={889} y={1164} />
      <Marker x={705} y={1450} />
      <Marker x={889} y={1736} />
      <Marker x={816} y={1450} c="#6ad42c" />
      <path d="M595 1350V1450H694" stroke="#e8e4e4" strokeWidth={2} fill="none" />
      <rect x={586} y={1440} width={19} height={19} fill="none" stroke="#e8e8e8" strokeWidth={2} />
      <text x={598} y={1341} fontFamily="DejaVu Sans" fontWeight={200} fontSize={32} fill="#e8e8e8">Y</text>
      <text x={705} y={1446} fontFamily="DejaVu Sans" fontWeight={200} fontSize={32} fill="#e8e8e8">X</text>
      <Grip x={868} y={866} />
      <Grip x={1480} y={866} />
      <Grip x={1022} y={1268} />
      <path d="M837 1080H981M908 1008V1152" stroke="#d3213a" strokeWidth={2} />
      <rect x={897} y={1069} width={22} height={22} fill="#e97373" stroke="#f09090" />
      <rect x={902} y={1074} width={12} height={12} fill="#f59090" stroke="#d3213a" />
    </svg>
  );
}

function Viewport() {
  return (
    <div className="relative mt-[2px] flex-1 overflow-hidden bg-[#212830]">
      <Drawing />
      <div className="absolute left-[29px] top-[12px] flex h-[26px] items-center font-['Open_Sans'] text-[22px] font-bold text-[#8c8e90]">
        <span className="text-[24px] font-normal">+</span>
        <span className="ml-[25px] h-[26px] w-[2px] bg-[#8c8e90]" />
        <span className="ml-[12px]">Top</span>
        <span className="ml-[16px] h-[26px] w-[2px] bg-[#8c8e90]" />
        <span className="ml-[13px]">2D Wireframe</span>
      </div>

      <Compass />
      <div className="absolute left-[1787px] top-[341px] flex h-[24px] w-[100px] items-center justify-between rounded-[10px] bg-[#6a727d] pl-[9px] pr-[10px] font-['Inter'] text-[20px] text-[#23272f]">
        WCS
        <svg width={18} height={12} viewBox="0 0 18 12"><path d="M1 1H17L9 11Z" fill="#8fa0a6" stroke="#23272f" strokeWidth={1.5} /></svg>
      </div>

      <div className="absolute left-[553px] top-[846px] flex h-[110px] w-[144px] flex-col justify-center rounded-[12px] bg-[#b1b3ba] pl-[27px] font-['Inter'] text-[26px] leading-[44px] text-[#1d1f24] shadow-[0_4px_12px_rgba(0,0,0,0.3)]">
        <span>Stretch</span>
        <span>Radius</span>
      </div>

      <div className="absolute bottom-0 left-[502px] w-[1000px]">
        <div className="relative ml-[80px] h-[185px] bg-[#3c4452] pl-[10px] pt-[5px] font-['Noto_Sans'] text-[20px] leading-[30px] text-[#c8cacc]">
          <p className="pl-[5px]">[cuTting edges/Crossing/mOde/Project/eRase/Undo]:</p>
          <p>Select object to trim or shift-select to extend or</p>
          <p className="pl-[5px]">[cuTting edges/Crossing/mOde/Project/eRase/Undo]:</p>
          <p>Command:</p>
          <p>Command: OS OSNAP</p>
          <p>Command:</p>
          <span className="absolute right-[12px] top-[141px] h-[40px] w-[7px] rounded-full bg-[#8c9096]" />
        </div>
        <div className="flex h-[50px] items-center bg-[#3c4452] font-['Noto_Sans']">
          <span className="ml-[17px] w-[73px] text-[#c8cacc]">
            <svg width={46} height={24} viewBox="0 0 46 24"><path d="M2 4L12 9L2 14" stroke="#c8cacc" strokeWidth={2} fill="none" /><path d="M15 20H29" stroke="#c8cacc" strokeWidth={2.5} /><path d="M33 5H45L39 14Z" fill="#c8cacc" /></svg>
          </span>
          <span className="text-[22px] italic text-[#8f9398]">Type a command</span>
          <span className="ml-auto h-0 w-0 border-x-[6px] border-t-[11px] border-x-transparent border-t-[#9a9da2]" />
          <svg className="ml-[26px] mr-[20px]" width={26} height={28} viewBox="0 0 26 28"><path d="M2 10H24V26H2ZM8 10V26" stroke="#c8cacc" strokeWidth={2} fill="none" /><path d="M14 18V4" stroke="#8cc4f5" strokeWidth={2} /><path d="M9 6L14 0L19 6Z" fill="#8cc4f5" /></svg>
        </div>
      </div>
    </div>
  );
}

function FileTabs() {
  return (
    <div className="flex h-[44px] shrink-0">
      <div className="flex w-[50px] items-center justify-center border-x-2 border-[#282d36] bg-[#3c4452]">
        <svg width={30} height={30} viewBox="0 0 30 30"><rect width={14} height={14} fill="#8cc4f5" /><rect x={16} width={14} height={14} fill="#d8d8d8" /><rect x={2} y={16} width={12} height={13} fill="#d8d8d8" /><rect x={16} y={16} width={14} height={13} fill="#d8d8d8" /></svg>
      </div>
      <div className="flex w-[46px] items-center justify-center border-r-2 border-[#282d36]">
        <svg width={24} height={24} viewBox="0 0 24 24"><path d="M0 12H24M12 0V24" stroke="#d8d8d8" strokeWidth={2} /></svg>
      </div>
      <div className="flex w-[258px] items-center border-r-2 border-[#282d36] bg-[#4c5a6e] pl-[6px] pb-[6px] font-['Noto_Sans'] text-[21.5px] font-semibold text-white">parabola*</div>
      <div className="flex-1 bg-[#3a4351]" />
    </div>
  );
}

function Field({ caret, dim, className, children }: { caret?: boolean; dim?: boolean; className?: string; children?: ReactNode }) {
  const base = dim
    ? "border-[#414a58] bg-[#414a58] text-[#7f848c]"
    : "border-[#2d3b3f] bg-[#4c596c] text-[#ececec]";
  return (
    <div className={`flex h-[36px] items-center rounded-[4px] border-2 ${base} ${className ?? "w-[243px]"}`}>
      {children}
      {caret && <span className={`ml-auto mr-[9px] h-0 w-0 border-x-[6px] border-t-[7px] border-x-transparent ${dim ? "border-t-[#6f747c]" : "border-t-[#d0d0d0]"}`} />}
    </div>
  );
}

function Row({ label, children }: { label: string; children: ReactNode }) {
  return (
    <div className="flex h-[46px] items-center">
      <span className="w-[218px] text-right text-[#b9bbbf]">{label}</span>
      <div className="ml-[21px] flex gap-[6px]">{children}</div>
    </div>
  );
}

function PickerBtn({ radius }: { radius?: boolean }) {
  return (
    <div className="flex h-[36px] w-[39px] items-center justify-center rounded-[4px] border-2 border-[#2d3b3f]">
      <svg width={34} height={30} viewBox="0 0 34 30">
        {radius ? (
          <path d="M3 1V28M31 1V10M7 5H27" stroke="#d8d8d8" strokeWidth={1.5} fill="none" />
        ) : (
          <>
            <path d="M3 2L13 10M23 2L16 8M3 22L13 14" stroke="#d8d8d8" strokeWidth={1.5} fill="none" />
            <rect x={12} y={9} width={4} height={4} fill="#8cc4f5" />
          </>
        )}
        <path d="M24 12V30M16 21H33M20 17H28V25H20Z" stroke="#ffffff" strokeWidth={1.8} fill="none" />
      </svg>
    </div>
  );
}

function RightPanel() {
  return (
    <aside className="flex w-[510px] shrink-0 flex-col border-l-2 border-[#282d36] bg-[#3c4452] font-['Noto_Sans'] text-[23px]">
      <div className="flex h-[44px] shrink-0 bg-[#2f3540]">
        <div className="flex w-[104px] items-center justify-center bg-[#3c4452]">
          <T><path d="M6 14L18 4H30L18 14ZM4 20H24M4 25H22" fill="#d8d8d8" stroke="#d8d8d8" strokeWidth={2} /><circle cx={26} cy={26} r={8} fill="#d8d8d8" /><path d="M26 24V31M26 20V22" stroke="#3c4452" strokeWidth={2} /></T>
        </div>
        <div className="flex w-[105px] items-center justify-center border-x-2 border-b-2 border-[#282d36]">
          <T><path d="M2 10H22L32 10V34H2Z" fill="#d8d8d8" /><rect x={3} y={0} width={8} height={18} rx={4} stroke="#d8d8d8" strokeWidth={2} fill="#2f3540" /></T>
        </div>
        <div className="relative flex w-[105px] items-center justify-center border-r-2 border-b-2 border-[#282d36]">
          <T><rect x={4} y={4} width={26} height={28} fill="#d8d8d8" /><path d="M8 12H14M16 12H21M23 12H28M8 19H14M16 19H21M23 19H28M4 9H30" stroke="#3c4452" strokeWidth={4} /></T>
          <span className="absolute left-[58px] top-[-4px] h-[21px] w-[21px] rounded-full border-2 border-white bg-[#e9773c]" />
        </div>
        <div className="flex-1 border-b-2 border-[#282d36]" />
        <div className="flex w-[48px] items-center justify-center border-l-2 border-[#282d36] bg-[#3c4452] text-[20px] text-[#a8abb0]">»</div>
      </div>

      <div className="flex h-[34px] shrink-0 items-center pl-[21px]">
        <span className="text-[24px] text-[#d8d8d8]">Properties</span>
        <div className="ml-[141px] flex h-[28px] w-[119px] items-center border-2 border-[#2b313b] text-[18px]">
          <span className="flex h-full w-[55px] items-center justify-center text-[#70757c]">All</span>
          <span className="flex h-full flex-1 items-center justify-center bg-[#4c5a6e] text-[#d5d6d8]">My</span>
        </div>
        <svg className="ml-[21px]" width={30} height={30} viewBox="0 0 30 30"><path d="M2 2H20V20L16 24H2Z" fill="none" stroke="#d8d8d8" strokeWidth={2} /><path d="M5 8H17M5 12H17M5 16H13" stroke="#d8d8d8" strokeWidth={1.5} /><path d="M14 26L24 14L30 20L20 30H14Z" fill="#d8d8d8" /></svg>
        <svg className="ml-[20px]" width={24} height={30} viewBox="0 0 24 30"><path d="M8 2H22V28H8M8 2V6M8 24V28M2 15H14" stroke="#ffffff" strokeWidth={2} fill="none" /><path d="M0 15L6 10V20Z" fill="#ffffff" /></svg>
      </div>

      <div className="mt-[15px] ml-[21px] flex h-[41px] w-[467px] items-center rounded-[4px] border-2 border-[#2d3b3f] bg-[#4c596c] pl-[13px] text-[24px] text-[#ececec]">
        Arc
        <span className="ml-auto mr-[9px] h-0 w-0 border-x-[6px] border-t-[7px] border-x-transparent border-t-[#d0d0d0]" />
      </div>

      <div className="mt-[9px]">
        <Row label="Color">
          <Field caret>
            <span className="ml-[15px] h-[16px] w-[18px] border-2 border-black bg-[#ec4fea]" />
            <span className="ml-[21px]">ByLayer</span>
          </Field>
        </Row>
        <Row label="Layer"><Field caret><span className="ml-[10px]">p2</span></Field></Row>
        <Row label="Linetype">
          <Field caret>
            <span className="ml-[13px] h-[2px] w-[64px] bg-white" />
            <span className="ml-[27px]">ByLayer</span>
          </Field>
        </Row>
        <Row label="Linetype scale"><Field><span className="ml-[3px]">1.0000</span></Field></Row>
        <Row label="Plot style"><Field caret dim><span className="ml-[10px]">ByColor</span></Field></Row>
        <Row label="Lineweight"><Field caret><span className="ml-[10px]">ByLayer</span></Field></Row>
        <Row label="Transparency">
          <div className="relative ml-[5px] flex h-[26px] w-[153px] items-center justify-end border-x-2 border-b-2 border-[#2d3b3f] pr-[6px] text-[#e0e0e0]">
            0
            <span className="absolute left-[-2px] top-0 h-[5px] w-[3px] bg-[#5d9ad6]" />
            <span className="absolute left-[-2px] bottom-0 h-[5px] w-[3px] bg-[#5d9ad6]" />
            <span className="absolute bottom-[2px] left-[72px] h-[10px] w-[1px] bg-[#7f848c]" />
          </div>
          <Field caret className="ml-[2px] w-[77px]">
            <svg className="ml-[13px]" width={26} height={22} viewBox="0 0 26 22"><path d="M7 2H25L17 9H0Z" fill="#8cc4f5" /><path d="M2 12H18L24 9M2 16H18L24 13M2 20H18L24 17" stroke="#d8d8d8" strokeWidth={2} fill="none" /></svg>
          </Field>
        </Row>
        <Row label="Center X"><Field className="w-[198px]"><span className="ml-[4px]">6.0000</span></Field><PickerBtn /></Row>
        <Row label="Center Y"><Field className="w-[198px]"><span className="ml-[4px]">3.9686</span></Field><PickerBtn /></Row>
        <Row label="Radius"><Field className="w-[198px]"><span className="ml-[4px]">4.1412</span></Field><PickerBtn radius /></Row>
        <Row label="Arc length"><Field dim><span className="ml-[4px]">2.9930</span></Field></Row>
      </div>
    </aside>
  );
}

function StatusSlot({ on, children }: { on?: boolean; children: ReactNode }) {
  return (
    <div className="flex h-[40px] w-[44px] items-center justify-center">
      <div className={on ? "flex h-[40px] w-[40px] items-center justify-center bg-[#6a8fbf]" : "flex h-[40px] w-[40px] items-center justify-center"}>
        <svg width={34} height={34} viewBox="0 0 34 34" fill="none">{children}</svg>
      </div>
    </div>
  );
}

function BottomBar() {
  const wh = "#ffffff";
  return (
    <div className="flex h-[48px] shrink-0 border-t-2 border-[#282d36] pb-[2px]">
      <div className="flex w-[1502px] text-[22px] font-['Noto_Sans']">
        <div className="flex w-[120px] items-center justify-center border-x-2 border-[#282d36] bg-[#4c5a6e] font-semibold text-white">Model</div>
        <div className="flex w-[46px] items-center justify-center border-r-2 border-[#282d36]">
          <svg width={24} height={24} viewBox="0 0 24 24"><path d="M0 12H24M12 0V24" stroke="#d8d8d8" strokeWidth={2} /></svg>
        </div>
        <div className="flex w-[118px] items-center justify-center border-r-2 border-[#282d36] text-[#aeb1b6]">Layout1</div>
        <div className="flex w-[118px] items-center justify-center border-r-2 border-[#282d36] text-[#aeb1b6]">Layout2</div>
      </div>
      <div className="flex flex-1 items-center border-l-2 border-[#282d36] font-['Noto_Sans'] text-[#c3c5c8]">
        <span className="w-[285px] whitespace-pre pl-[21px] text-[23.5px]">2.1262,  2.5045 , 0.0000</span>
        <StatusSlot on><path d="M2 8H32M2 17H32M2 26H32M9 1V33M17 1V33M25 1V33" stroke={wh} strokeWidth={2} /></StatusSlot>
        <StatusSlot><path d="M6 8H10M15 8H19M24 8H28M6 17H10M15 17H19M24 17H28M6 26H10M15 26H19M24 26H28" stroke={W} strokeWidth={4} /></StatusSlot>
        <StatusSlot><path d="M6 1V30H30M14 30V21H20" stroke={W} strokeWidth={3} /></StatusSlot>
        <StatusSlot><circle cx={14} cy={18} r={11} stroke={W} strokeWidth={2} /><path d="M8 28L26 4M14 18H32" stroke={W} strokeWidth={2} /></StatusSlot>
        <StatusSlot><path d="M4 11H18M11 4V18" stroke={W} strokeWidth={2} /><rect x={16} y={19} width={16} height={11} fill={W} /></StatusSlot>
        <StatusSlot><rect x={1} y={3} width={32} height={6} fill={W} /><rect x={1} y={14} width={20} height={6} fill={W} /><rect x={1} y={25} width={28} height={6} fill={W} /></StatusSlot>
        <StatusSlot on><rect x={3} y={2} width={28} height={30} stroke={wh} strokeWidth={2} /><path d="M7 6H27V28H7Z" fill={W} /><path d="M7 6H11V10H7ZM15 6H19V10H15ZM23 6H27V10H23ZM11 10H15V14H11ZM19 10H23V14H19ZM7 14H11V18H7ZM15 14H19V18H15ZM23 14H27V18H23ZM11 18H15V22H11ZM19 18H23V22H19ZM7 22H11V26H7ZM15 22H19V26H15ZM23 22H27V26H23Z" fill="#4a6a96" /></StatusSlot>
        <StatusSlot on><path d="M8 3H3V31H8M26 3H31V14" stroke={wh} strokeWidth={2} /><rect x={11} y={5} width={12} height={11} stroke={wh} strokeWidth={2} /><circle cx={17} cy={23} r={5} stroke={wh} strokeWidth={2} /><path d="M22 18L33 28L27 29L29 34Z" fill={wh} /></StatusSlot>
        <StatusSlot on><path d="M3 30H32M3 30L20 10V3" stroke={wh} strokeWidth={3} fill="none" /></StatusSlot>
        <StatusSlot on><rect x={2} y={2} width={10} height={10} stroke={wh} strokeWidth={2} /><path d="M12 7H31V31H3V13" stroke={wh} strokeWidth={2} /></StatusSlot>
        <StatusSlot on><path d="M13 2L17 20L24 32H17L13 26L9 32H2L9 20Z" fill={wh} /><circle cx={25} cy={11} r={7} fill={wh} /></StatusSlot>
        <StatusSlot><path d="M12 2L16 20L23 32H16L12 26L8 32H1L8 20Z" fill={W} /><path d="M26 1L19 12H24L20 20L31 9H26Z" fill={Y} /></StatusSlot>
        <StatusSlot><path d="M17 2L21 20L28 32H21L17 26L13 32H6L13 20Z" fill={W} /></StatusSlot>
        <span className="ml-[1px] text-[22px] text-[#aeb1b6]">1:1</span>
        <span className="ml-[10px] h-0 w-0 border-x-[5px] border-t-[10px] border-x-transparent border-t-[#aeb1b6]" />
        <div className="ml-[8px] flex w-[44px] justify-center">
          <svg width={34} height={34} viewBox="0 0 34 34" fill="none"><rect x={2} y={1} width={13} height={14} stroke={W} strokeWidth={2} /><circle cx={26} cy={15} r={6} stroke={W} strokeWidth={2} /><path d="M13 32L19 20L25 32Z" stroke={W} strokeWidth={2} /></svg>
        </div>
        <FaCog className="ml-[6px] text-[33px] text-[#d0d0d0]" />
      </div>
    </div>
  );
}

function MenuBar() {
  const items = ["File", "Edit", "View", "Insert", "Format", "Tools", "Draw", "Dimension", "Modify", "Window", "Help"];
  return (
    <header className="flex h-[48px] shrink-0 items-center bg-gradient-to-r from-[#efede6] to-[#e6e3db] font-['Inter'] text-[26px] text-[#111111]">
      <FaApple className="ml-[37px] text-[36px] text-black" />
      <span className="ml-[34px] font-bold">AutoCAD 2023</span>
      <nav className="ml-[44px] flex gap-[40px]">
        {items.map((item) => (
          <span key={item}>{item}</span>
        ))}
      </nav>
      <div className="ml-auto flex items-center">
        <svg width={44} height={34} viewBox="0 0 44 34" fill="none">
          <path d="M6 24C1 14 8 2 20 2C30 2 35 8 35 16" stroke="#111" strokeWidth={3} />
          <circle cx={20} cy={17} r={7} stroke="#111" strokeWidth={3} />
          <path d="M10 28C4 22 6 10 16 8" stroke="#111" strokeWidth={3} />
          <circle cx={32} cy={25} r={9} fill="#2a7ab8" />
          <path d="M29 21V29M35 21V29" stroke="#fff" strokeWidth={2} />
        </svg>
        <FaBluetoothB className="ml-[38px] text-[30px] text-[#111]" />
        <svg className="ml-[35px]" width={52} height={26} viewBox="0 0 52 26" fill="none">
          <rect x={1} y={1} width={44} height={24} rx={7} stroke="#555" strokeWidth={2} />
          <rect x={4} y={4} width={17} height={18} rx={3} fill="#111" />
          <path d="M48 9V17" stroke="#555" strokeWidth={3} />
          <path d="M28 1L17 15H24L20 25L33 10H25Z" fill="#111" stroke="#e8e5dd" strokeWidth={1} />
        </svg>
        <FaWifi className="ml-[36px] text-[34px] text-[#111]" />
        <Search className="ml-[38px] h-[30px] w-[30px] text-[#111]" strokeWidth={3} />
        <svg className="ml-[38px]" width={28} height={32} viewBox="0 0 28 32" fill="none">
          <rect x={1.5} y={1.5} width={25} height={13} rx={6.5} stroke="#111" strokeWidth={3} />
          <circle cx={20} cy={8} r={3} fill="#111" />
          <rect x={0} y={17} width={28} height={15} rx={7.5} fill="#111" />
          <circle cx={8} cy={24.5} r={4} fill="#e8e5dd" />
        </svg>
        <span className="ml-[36px] h-[30px] w-[28px] rounded-full bg-[conic-gradient(#58c7c0,#4a8fd8,#8a4fc8,#d8508a,#56a878,#58c7c0)]" />
        <div className="ml-[32px] mr-[37px] flex w-[223px] justify-between whitespace-nowrap text-[26px]">
          <span>Thu 10 Oct</span>
          <span>11:33</span>
        </div>
      </div>
    </header>
  );
}

export default function App() {
  return (
    <div className="flex h-[1800px] w-[2880px] flex-col overflow-hidden bg-[#14161a] font-['Inter']">
      <MenuBar />
      <div className="relative h-[32px] shrink-0 bg-gradient-to-b from-[#d9d6cd] to-[#d0cec6]">
        <div className="absolute bottom-0 left-[2703px] h-[10px] w-[94px] rounded-t-[6px] bg-[#7b7e82]" />
      </div>
      <div className="relative flex flex-1 flex-col overflow-hidden rounded-[20px] border-t border-[#83868c] bg-[#3c4452]">
        <div className="flex h-[42px] shrink-0 items-center justify-center font-['Noto_Sans'] text-[27px] font-semibold text-[#a9abb0]">
          <svg width={24} height={30} viewBox="0 0 24 30"><path d="M0 0H16L24 8V30H0Z" fill="#8d919a" /><path d="M6 22C7 14 9 10 12 10" stroke="#3a4a6a" strokeWidth={1.5} fill="none" /></svg>
          <span className="ml-[13px] whitespace-pre">Autodesk AutoCAD 2023   parabola.dwg</span>
        </div>
        <span className="absolute left-[16px] top-[16px] flex h-[24px] w-[24px] items-center justify-center rounded-full bg-[#f4655b]"><span className="h-[9px] w-[9px] rounded-full bg-[#8a1a14]" /></span>
        <span className="absolute left-[55px] top-[16px] h-[24px] w-[24px] rounded-full bg-[#f7bd4b]" />
        <span className="absolute left-[96px] top-[16px] h-[24px] w-[24px] rounded-full bg-[#5fc454]" />
        <div className="absolute right-0 top-0 flex h-[43px] w-[239px] items-center border-l-2 border-b-2 border-[#2d333d] bg-[#414b5c] pl-[13px] font-['Noto_Sans'] text-[23.5px] text-[#d0d2d4]">
          <svg width={28} height={32} viewBox="0 0 28 32"><circle cx={14} cy={8} r={5} fill="none" stroke="#d8d8d8" strokeWidth={2} /><path d="M2 32V26C2 18 8 15 14 15C20 15 26 18 26 26V32" fill="none" stroke="#d8d8d8" strokeWidth={2} /></svg>
          <span className="ml-[9px]">Vitor Mendes</span>
          <span className="ml-auto mr-[12px] h-0 w-0 border-x-[5px] border-t-[9px] border-x-transparent border-t-[#d0d2d4]" />
        </div>
        <Toolbar />
        <div className="flex min-h-0 flex-1 border-t-[3px] border-[#282d36]">
          <LeftPanel />
          <div className="flex min-w-0 flex-1 flex-col">
            <div className="flex min-h-0 flex-1">
              <div className="flex min-w-0 flex-1 flex-col">
                <FileTabs />
                <Viewport />
              </div>
              <RightPanel />
            </div>
            <BottomBar />
          </div>
        </div>
      </div>
    </div>
  );
}
